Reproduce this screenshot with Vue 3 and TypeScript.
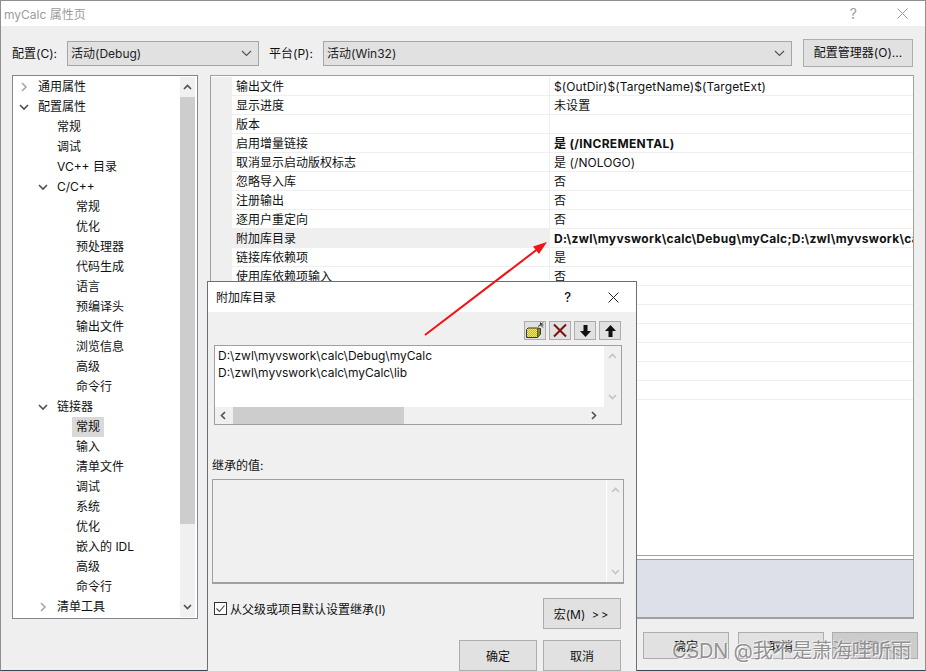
<script setup lang="ts">
interface TreeRow { label: string; level: number; chevron?: 'open' | 'closed'; selected?: boolean }
interface PropRow { name: string; value: string; bold?: boolean; active?: boolean }

const treeRows: TreeRow[] = [
  { label: '通用属性', level: 0, chevron: 'closed' },
  { label: '配置属性', level: 0, chevron: 'open' },
  { label: '常规', level: 1 },
  { label: '调试', level: 1 },
  { label: 'VC++ 目录', level: 1 },
  { label: 'C/C++', level: 1, chevron: 'open' },
  { label: '常规', level: 2 },
  { label: '优化', level: 2 },
  { label: '预处理器', level: 2 },
  { label: '代码生成', level: 2 },
  { label: '语言', level: 2 },
  { label: '预编译头', level: 2 },
  { label: '输出文件', level: 2 },
  { label: '浏览信息', level: 2 },
  { label: '高级', level: 2 },
  { label: '命令行', level: 2 },
  { label: '链接器', level: 1, chevron: 'open' },
  { label: '常规', level: 2, selected: true },
  { label: '输入', level: 2 },
  { label: '清单文件', level: 2 },
  { label: '调试', level: 2 },
  { label: '系统', level: 2 },
  { label: '优化', level: 2 },
  { label: '嵌入的 IDL', level: 2 },
  { label: '高级', level: 2 },
  { label: '命令行', level: 2 },
  { label: '清单工具', level: 1, chevron: 'closed' }
]

const propRows: PropRow[] = [
  { name: '输出文件', value: '$(OutDir)$(TargetName)$(TargetExt)' },
  { name: '显示进度', value: '未设置' },
  { name: '版本', value: '' },
  { name: '启用增量链接', value: '是 (/INCREMENTAL)', bold: true },
  { name: '取消显示启动版权标志', value: '是 (/NOLOGO)' },
  { name: '忽略导入库', value: '否' },
  { name: '注册输出', value: '否' },
  { name: '逐用户重定向', value: '否' },
  { name: '附加库目录', value: 'D:\\zwl\\myvswork\\calc\\Debug\\myCalc;D:\\zwl\\myvswork\\calc\\myCalc\\lib;%(AdditionalLibraryDirectories)', bold: true, active: true },
  { name: '链接库依赖项', value: '是' },
  { name: '使用库依赖项输入', value: '否' },
  { name: '', value: '' },
  { name: '', value: '' },
  { name: '', value: '' },
  { name: '', value: '' },
  { name: '', value: '' },
  { name: '', value: '' }
]

const indent = (level: number) => ({ paddingLeft: `${level * 19 + 25}px` })
</script>

<template>
  <div class="screen">
    <div class="window">
      <header class="titlebar">
        <span class="title-text">myCalc 属性页</span>
        <span class="title-help">?</span>
        <svg class="title-close" width="11" height="11" viewBox="0 0 11 11"><path d="M.5.5l10 10M10.5.5l-10 10" stroke="#9a9a9a" fill="none" /></svg>
      </header>

      <div class="config-bar">
        <span class="config-label first">配置(C):</span>
        <div class="select select-config">
          <span>活动(Debug)</span>
          <svg width="11" height="7" viewBox="0 0 11 7"><path d="M1 1l4.500 4.500L10 1" stroke="#555" stroke-width="1.200" fill="none" /></svg>
        </div>
        <span class="config-label second">平台(P):</span>
        <div class="select select-platform">
          <span>活动(Win32)</span>
          <svg width="11" height="7" viewBox="0 0 11 7"><path d="M1 1l4.500 4.500L10 1" stroke="#555" stroke-width="1.200" fill="none" /></svg>
        </div>
        <button class="btn btn-manager">配置管理器(O)...</button>
      </div>

      <div class="panels">
        <aside class="tree">
          <div class="tree-rows">
            <div v-for="(row, i) in treeRows" :key="i" class="tree-row" :style="indent(row.level)">
              <svg v-if="row.chevron === 'open'" class="chev" width="10" height="7" viewBox="0 0 10 7"><path d="M1 1l4 4 4-4" stroke="#505050" stroke-width="1.600" fill="none" /></svg>
              <svg v-else-if="row.chevron === 'closed'" class="chev chev-closed" width="7" height="10" viewBox="0 0 7 10"><path d="M1 1l4 4-4 4" stroke="#a6a6a6" stroke-width="1.600" fill="none" /></svg>
              <span class="tree-label" :class="{ selected: row.selected }">{{ row.label }}</span>
            </div>
          </div>
          <div class="tree-scroll">
            <svg class="sb-arrow" width="9" height="6" viewBox="0 0 9 6"><path d="M1 5l3.500-3.500L8 5" stroke="#505050" stroke-width="1.600" fill="none" /></svg>
            <div class="tree-thumb-track"><div class="tree-thumb"></div></div>
            <svg class="sb-arrow" width="9" height="6" viewBox="0 0 9 6"><path d="M1 1l3.500 3.500L8 1" stroke="#505050" stroke-width="1.600" fill="none" /></svg>
          </div>
        </aside>

        <section class="props">
          <div class="grid">
            <div v-for="(row, i) in propRows" :key="i" class="prop-row">
              <div class="gutter"></div>
              <div class="prop-name" :class="{ active: row.active }">{{ row.name }}</div>
              <div class="prop-value" :class="{ bold: row.bold }">{{ row.value }}</div>
            </div>
          </div>
          <div class="desc-gap"></div>
          <div class="desc"></div>
        </section>
      </div>

      <footer class="footer">
        <button class="btn foot-btn">确定</button>
        <button class="btn foot-btn">取消</button>
        <button class="btn foot-btn disabled">应用(A)</button>
      </footer>
    </div>

    <div class="dialog">
      <header class="dialog-title">
        <span class="dialog-title-text">附加库目录</span>
        <span class="dialog-help">?</span>
        <svg class="dialog-close" width="11" height="11" viewBox="0 0 11 11"><path d="M.5.5l10 10M10.5.5l-10 10" stroke="#222" fill="none" /></svg>
      </header>
      <div class="dialog-body">
        <div class="tool-row">
          <button class="tool">
            <svg width="20" height="17" viewBox="0 0 20 17">
              <defs>
                <pattern id="dither" width="2" height="2" patternUnits="userSpaceOnUse">
                  <rect width="2" height="2" fill="#ffef3a" />
                  <rect width="1" height="1" fill="#b8b070" />
                  <rect x="1" y="1" width="1" height="1" fill="#b8b070" />
                </pattern>
              </defs>
              <path d="M1.500 7.500L3 6H12.500V15.500H1.500z" fill="url(#dither)" stroke="#3a3a20" />
              <path d="M12.500 15.500L15.500 12V6.500L12.500 6" fill="#8a8430" stroke="#3a3a20" />
              <path d="M13 4.500l4-3M15.500 .5v2.500M18.500 3h-3M18 .5l-2 2M18 5.500l-2-2" stroke="#333" stroke-width="1" fill="none" />
            </svg>
          </button>
          <button class="tool">
            <svg width="16" height="15" viewBox="0 0 16 15"><path d="M2 1.500l12 12M14 1.500L2 13.500" stroke="#7a1010" stroke-width="2" fill="none" /></svg>
          </button>
          <button class="tool">
            <svg width="11" height="12" viewBox="0 0 11 12"><path d="M3.500 0h4v6h3.500L5.500 12 0 6h3.500z" fill="#111" /></svg>
          </button>
          <button class="tool">
            <svg width="11" height="12" viewBox="0 0 11 12"><path d="M3.500 12h4V6h3.500L5.500 0 0 6h3.500z" fill="#111" /></svg>
          </button>
        </div>

        <div class="list">
          <div class="list-main">
            <div class="list-text">
              <div>D:\zwl\myvswork\calc\Debug\myCalc</div>
              <div>D:\zwl\myvswork\calc\myCalc\lib</div>
            </div>
            <div class="vscroll">
              <svg width="9" height="6" viewBox="0 0 9 6"><path d="M1 5l3.500-3.500L8 5" stroke="#c4c4c4" stroke-width="1.600" fill="none" /></svg>
              <svg width="9" height="6" viewBox="0 0 9 6"><path d="M1 1l3.500 3.500L8 1" stroke="#c4c4c4" stroke-width="1.600" fill="none" /></svg>
            </div>
          </div>
          <div class="hscroll">
            <svg width="6" height="9" viewBox="0 0 6 9"><path d="M5 1L1.500 4.500 5 8" stroke="#505050" stroke-width="1.600" fill="none" /></svg>
            <div class="hthumb"></div>
            <svg width="6" height="9" viewBox="0 0 6 9"><path d="M1 1l3.500 3.500L1 8" stroke="#505050" stroke-width="1.600" fill="none" /></svg>
          </div>
        </div>

        <div class="inherit-label">继承的值:</div>
        <div class="inherit-box">
          <div class="inherit-scroll">
            <svg width="9" height="6" viewBox="0 0 9 6"><path d="M1 5l3.500-3.500L8 5" stroke="#c4c4c4" stroke-width="1.600" fill="none" /></svg>
            <svg width="9" height="6" viewBox="0 0 9 6"><path d="M1 1l3.500 3.500L8 1" stroke="#c4c4c4" stroke-width="1.600" fill="none" /></svg>
          </div>
        </div>

        <div class="check-row">
          <label class="check">
            <svg class="checkbox" width="13" height="13" viewBox="0 0 13 13">
              <rect x=".5" y=".5" width="12" height="12" fill="#fff" stroke="#333" />
              <path d="M2.500 6.500l3 3 5-6" stroke="#444" stroke-width="1.100" fill="none" />
            </svg>
            <span>从父级或项目默认设置继承(I)</span>
          </label>
          <button class="btn dlg-btn">宏(M) <span class="macro-arrows">&gt;&gt;</span></button>
        </div>

        <div class="dialog-foot">
          <button class="btn dlg-btn">确定</button>
          <button class="btn dlg-btn">取消</button>
        </div>
      </div>
    </div>

    <svg class="arrow" width="926" height="671" viewBox="0 0 926 671">
      <path d="M425 335L539 248" stroke="#f01414" stroke-width="2" fill="none" />
      <path d="M547 242L533 246.500L539 254z" fill="#f01414" />
    </svg>

    <div class="watermark">CSDN @我不是萧海哇听雨</div>
  </div>
</template>

<style>
html, body { margin: 0; padding: 0; background: #efefef; }
</style>

<style scoped>
.screen {
  position: relative;
  width: 926px;
  height: 671px;
  overflow: hidden;
  font-family: Inter, "Noto Sans CJK SC", sans-serif;
  font-size: 12px;
  color: #111;
  background: #efefef;
}
.window {
  box-sizing: border-box;
  width: 926px;
  height: 671px;
  border: 1px solid #8f8f8f;
  border-bottom-color: #3b4452;
  background: #efefef;
  display: flex;
  flex-direction: column;
}
.titlebar {
  height: 25px;
  background: #fff;
  display: flex;
  align-items: center;
  padding: 0 17px 0 3px;
  color: #9b9b9b;
  flex: none;
}
.title-text { flex: 1; }
.title-help { font-size: 14px; margin-right: 40px; }
.config-bar {
  display: flex;
  align-items: center;
  height: 28px;
  margin-top: 13px;
  padding-left: 11px;
  flex: none;
}
.config-label { padding-bottom: 2px; }
.config-label.first { width: 55px; }
.config-label.second { width: 54px; margin-left: 10px; }
.select {
  box-sizing: border-box;
  height: 25px;
  background: #e1e1e1;
  border: 1px solid #a6a6a6;
  display: flex;
  align-items: center;
  justify-content: space-between;
  padding: 0 3px 2px 3px;
  color: #222;
}
.select svg { margin: 2px 3px 0 0; }
.select-config { width: 192px; }
.select-platform { width: 469px; }
.btn {
  box-sizing: border-box;
  background: #e1e1e1;
  border: 1px solid #adadad;
  font: inherit;
  color: #111;
  padding: 0;
  flex: none;
}
.btn-manager { width: 110px; height: 28px; margin-left: 11px; padding-bottom: 3px; }
.panels {
  display: flex;
  margin-top: 8px;
  padding-left: 11px;
  height: 544px;
  flex: none;
}
.tree {
  box-sizing: border-box;
  width: 186px;
  height: 544px;
  border: 1px solid #82878f;
  background: #fff;
  display: flex;
  padding: 1px 2px 1px 0;
}
.tree-rows { flex: 1; min-width: 0; }
.tree-row {
  position: relative;
  height: 20px;
  line-height: 20px;
  white-space: nowrap;
}
.chev { position: absolute; left: 0; top: 7px; }
.tree-row:nth-child(1) .chev { left: 8px; top: 5px; }
.tree-row:nth-child(2) .chev { left: 6px; }
.tree-row:nth-child(6) .chev { left: 25px; }
.tree-row:nth-child(17) .chev { left: 25px; }
.tree-row:nth-child(27) .chev { left: 27px; top: 5px; }
.tree-label { display: inline-block; padding: 0 4px; margin-left: -4px; }
.tree-label.selected { background: #d9d9d9; padding: 0 4px; }
.tree-scroll {
  width: 15px;
  background: #f0f0f0;
  display: flex;
  flex-direction: column;
  align-items: center;
  flex: none;
}
.sb-arrow { flex: none; margin: 7px 0; }
.tree-thumb-track { flex: 1; width: 15px; }
.tree-thumb { height: 427px; width: 15px; background: #cdcdcd; }
.props {
  box-sizing: border-box;
  width: 704px;
  height: 544px;
  margin-left: 12px;
  border: 1px solid #a0a0a0;
  background: #fff;
  display: flex;
  flex-direction: column;
  overflow: hidden;
}
.grid { height: 480px; flex: none; border-bottom: 1px solid #a0a0a0; box-sizing: border-box; background: #fff; padding-top: 1px; }
.prop-row {
  display: flex;
  height: 19px;
  line-height: 20px;
  box-sizing: border-box;
  border-bottom: 1px solid #efefef;
}
.gutter { width: 21px; background: #efefef; flex: none; height: 19px; }
.prop-name {
  width: 318px;
  box-sizing: border-box;
  padding-left: 4px;
  flex: none;
  border-right: 1px solid #efefef;
  white-space: nowrap;
}
.prop-name.active { background: #efefef; }
.prop-value {
  padding-left: 4px;
  flex: 1;
  min-width: 0;
  white-space: nowrap;
  overflow: hidden;
  letter-spacing: .08px;
}
.prop-value.bold { font-weight: 700; letter-spacing: .32px; }
.desc-gap { height: 3px; flex: none; }
.desc {
  flex: 1;
  background: #dde0e8;
  border-top: 1px solid #a0a0a0;
  border-bottom: 1px solid #a0a0a0;
}
.footer {
  display: flex;
  justify-content: flex-end;
  gap: 9px;
  margin-top: 13px;
  padding-right: 7px;
  flex: none;
}
.foot-btn { width: 86px; height: 27px; }
.foot-btn:last-child { margin-left: -1px; }
.foot-btn.disabled { background: #ccc; color: #888; }
.dialog {
  position: absolute;
  left: 207px;
  top: 281px;
  box-sizing: border-box;
  width: 430px;
  height: 400px;
  background: #f0f0f0;
  border: 1px solid #6b6f78;
  display: flex;
  flex-direction: column;
}
.dialog-title {
  height: 30px;
  background: #fff;
  display: flex;
  align-items: center;
  padding: 0 17px 0 8px;
  flex: none;
}
.dialog-title-text { flex: 1; padding-bottom: 2px; }
.dialog-help { font-size: 13px; font-weight: 500; margin-right: 37px; }
.dialog-body {
  padding: 9px 0 0 6px;
  flex: 1;
  display: flex;
  flex-direction: column;
}
.tool-row {
  display: flex;
  justify-content: flex-end;
  gap: 3px;
  padding-right: 15px;
  height: 19px;
  flex: none;
}
.tool {
  box-sizing: border-box;
  width: 22px;
  height: 19px;
  background: #e1e1e1;
  border: 1px solid #adadad;
  padding: 0;
  display: flex;
  align-items: center;
  justify-content: center;
}
.list {
  box-sizing: border-box;
  width: 408px;
  height: 80px;
  margin-top: 5px;
  border: 1px solid #a0a0a0;
  background: #f0f0f0;
  display: flex;
  flex-direction: column;
}
.list-main { flex: 1; display: flex; min-height: 0; }
.list-text { width: 389px; background: #fff; padding: 1px 0 0 3px; box-sizing: border-box; line-height: 17px; }
.vscroll, .inherit-scroll {
  flex: 1;
  display: flex;
  flex-direction: column;
  justify-content: space-between;
  align-items: center;
  padding: 7px 0;
  box-sizing: border-box;
}
.hscroll {
  height: 17px;
  display: flex;
  align-items: center;
  flex: none;
  padding: 0 24px 0 5px;
}
.hthumb { width: 171px; height: 17px; background: #cdcdcd; margin: 0 auto 0 7px; }
.inherit-label { margin-top: 33px; margin-left: -2px; line-height: 16px; }
.inherit-box {
  box-sizing: border-box;
  width: 412px;
  height: 105px;
  margin: 5px 0 0 -2px;
  border: 1px solid #a0a0a0;
  border-bottom-width: 2px;
  background: #f0f0f0;
  display: flex;
  justify-content: flex-end;
}
.inherit-scroll {
  flex: none;
  width: 17px;
  border-left: 1px solid #fff;
  height: 100%;
}
.check-row {
  display: flex;
  justify-content: space-between;
  align-items: flex-start;
  margin-top: 14px;
  padding-right: 15px;
}
.check { display: flex; align-items: center; gap: 3px; margin-top: 2px; }
.checkbox { display: block; flex: none; }
.dlg-btn { width: 78px; height: 31px; }
.macro-arrows { letter-spacing: 2px; margin-left: 3px; font-size: 11px; }
.dialog-foot {
  display: flex;
  justify-content: flex-end;
  gap: 6px;
  margin-top: 11px;
  padding-right: 15px;
}
.arrow { position: absolute; left: 0; top: 0; pointer-events: none; }
.watermark {
  position: absolute;
  left: 672px;
  top: 639px;
  font-size: 20px;
  letter-spacing: -.2px;
  line-height: 24px;
  white-space: nowrap;
  color: rgba(120, 120, 120, .8);
  text-shadow: 1px 1px 0 rgba(255, 255, 255, .9), -1px -1px 0 rgba(255, 255, 255, .5);
}
</style>
